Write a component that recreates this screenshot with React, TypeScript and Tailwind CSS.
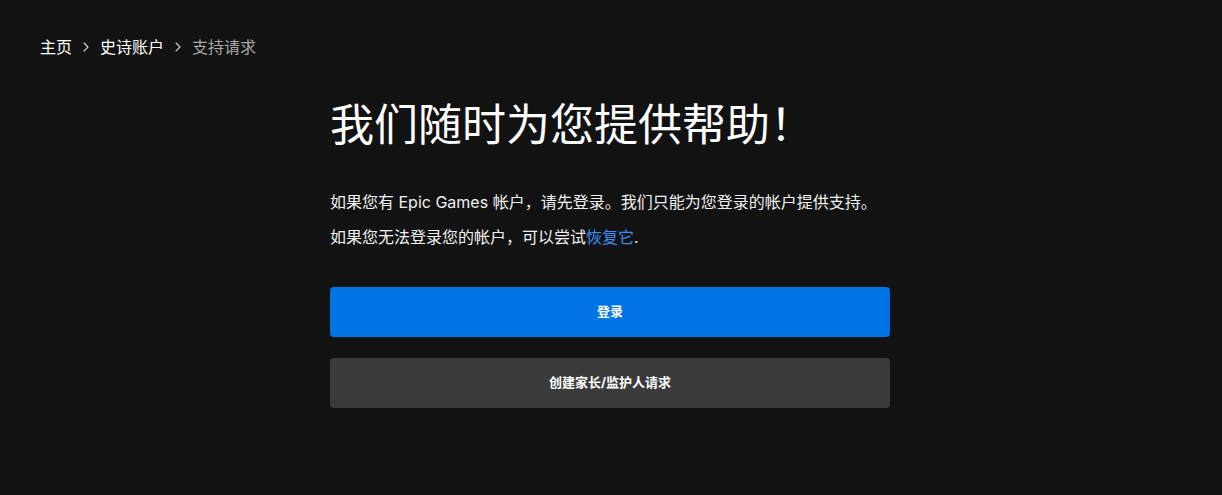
import { ChevronRight } from "lucide-react";

const font = {
  fontFamily: '"Inter", "Noto Sans CJK SC", sans-serif',
};

const crumbs = [
  { label: "主页", current: false },
  { label: "史诗账户", current: false },
  { label: "支持请求", current: true },
];

export default function App() {
  return (
    <div className="min-h-[495px] w-full bg-[#121212] pr-[2px] text-white" style={font}>
      <nav className="flex items-center px-10 pt-[37px] text-[16px] leading-5">
        {crumbs.map((c, i) => (
          <div key={c.label} className="flex items-center">
            {i > 0 && (
              <ChevronRight className="mx-[6px] h-[16px] w-[16px] text-[#d4d4d4]" strokeWidth={1.6} />
            )}
            <span className={c.current ? "text-[#a8a8a8]" : "text-white"}>{c.label}</span>
          </div>
        ))}
      </nav>

      <main className="mx-auto mt-[38px] w-[560px]">
        <h1 className="text-[44px] leading-[60px] font-normal">我们随时为您提供帮助！</h1>

        <div className="mt-[30px] text-[16px] leading-[35px] text-[#f0f0f0]">
          <p>如果您有 Epic Games 帐户，请先登录。我们只能为您登录的帐户提供支持。</p>
          <p>
            如果您无法登录您的帐户，可以尝试
            <a href="#" className="text-[#3a8ff5]">
              恢复它
            </a>
            .
          </p>
        </div>

        <div className="mt-[32px] flex flex-col gap-[21px]">
          <button className="h-[50px] w-full rounded-[4px] bg-[#0074e4] text-[13px] font-bold text-white">
            登录
          </button>
          <button className="h-[50px] w-full rounded-[4px] bg-[#3a3a3a] text-[13px] font-bold text-white">
            创建家长/监护人请求
          </button>
        </div>
      </main>
    </div>
  );
}
